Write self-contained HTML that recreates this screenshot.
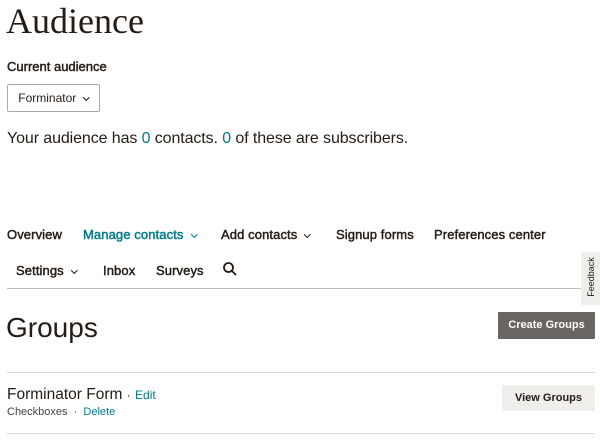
<!DOCTYPE html>
<html><head><style>
body{margin:0;width:600px;height:441px;background:#fff;position:relative;overflow:hidden;font-family:"Liberation Sans",sans-serif;color:#241c15}
.a{position:absolute;white-space:nowrap}
.t{color:#007c89}
.nav{font-size:13px;-webkit-text-stroke:0.45px currentColor;letter-spacing:0.1px}
.chev{display:inline-block;width:3.5px;height:3.5px;border-right:1.8px solid currentColor;border-bottom:1.8px solid currentColor;transform:rotate(45deg);margin-left:8px;position:relative;top:-3px;-webkit-text-stroke:0}
.line{position:absolute;left:7px;width:588px;height:1px;background:#d9d9d9}
</style></head><body>
<div class="a" style="left:6px;top:0px;font-family:'Liberation Serif',serif;font-size:36px;">Audience</div>
<div class="a" style="left:7px;top:59px;font-size:13px;-webkit-text-stroke:0.45px #241c15">Current audience</div>
<div class="a" style="left:7px;top:84px;width:91px;height:26px;border:1px solid #aaa;border-radius:2px;font-size:12px;line-height:26px;text-align:center">Forminator<span class="chev"></span></div>
<div class="a" style="left:7px;top:130px;font-size:16px;letter-spacing:-0.1px">Your audience has <span class="t">0</span> contacts. <span class="t">0</span> of these are subscribers.</div>
<div class="a nav" style="left:7px;top:227px">Overview</div>
<div class="a nav t" style="left:83px;top:227px">Manage contacts<span class="chev"></span></div>
<div class="a nav" style="left:221px;top:227px">Add contacts<span class="chev"></span></div>
<div class="a nav" style="left:336px;top:227px">Signup forms</div>
<div class="a nav" style="left:434px;top:227px">Preferences center</div>
<div class="a nav" style="left:16px;top:263px">Settings<span class="chev"></span></div>
<div class="a nav" style="left:103px;top:263px">Inbox</div>
<div class="a nav" style="left:156px;top:263px">Surveys</div>
<svg class="a" style="left:222px;top:261px" width="16" height="16" viewBox="0 0 16 16"><circle cx="6.5" cy="6.5" r="4.5" fill="none" stroke="#241c15" stroke-width="1.8"/><path d="M10 10L14 14" stroke="#241c15" stroke-width="1.8"/></svg>
<div class="line" style="top:288px;background:#bbb;width:585px"></div>
<div class="a" style="left:581px;top:252px;width:19px;height:53px;background:#efeeea"><div style="position:absolute;left:-14px;top:20px;transform:rotate(-90deg);font-size:9px;width:48px;text-align:center">Feedback</div></div>
<div class="a" style="left:6px;top:312px;font-size:28px">Groups</div>
<div class="a" style="left:498px;top:312px;width:97px;height:27px;background:#6b6561;color:#fff;font-size:11px;font-weight:bold;line-height:27px;text-align:center;border-radius:1px">Create Groups</div>
<div class="line" style="top:372px"></div>
<div class="a" style="left:7px;top:386px;font-size:15.5px">Forminator Form <span style="font-size:12px">·</span> <span class="t" style="font-size:12px">Edit</span></div>
<div class="a" style="left:7px;top:406px;font-size:11px;color:#444">Checkboxes &nbsp;· &nbsp;<span class="t">Delete</span></div>
<div class="a" style="left:502px;top:385px;width:93px;height:26px;background:#efeeea;font-size:11px;font-weight:bold;line-height:26px;text-align:center">View Groups</div>
<div class="line" style="top:433px"></div>
</body></html>
